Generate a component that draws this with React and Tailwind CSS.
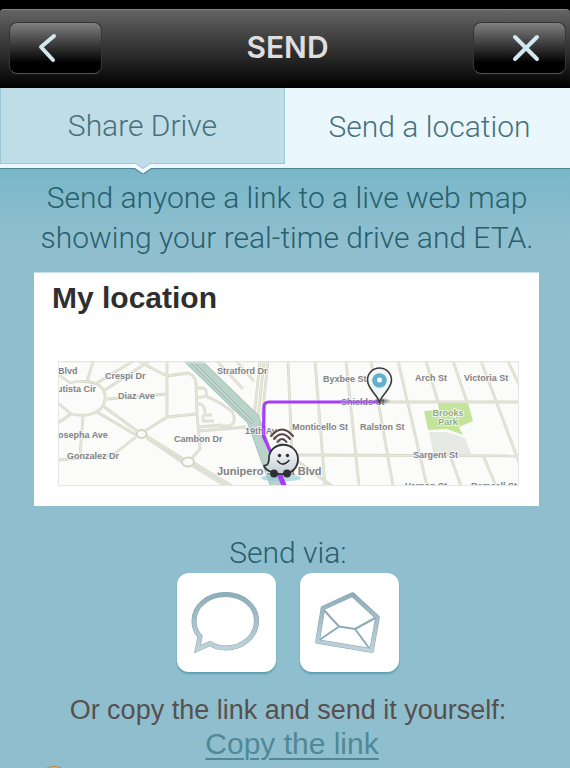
import React, { useState } from 'react';

const roads = [
  'M58 374 L70 383 C76 381 92 380 100 386 C106 391 107 400 102 407 C97 414 86 417 71 414 L58 403',
  'M93 361 L87 382',
  'M97 383 L133 361',
  'M105 390 L145 364 L150 361',
  'M138 361 L167 376',
  'M167 361 L167 417 L145 431',
  'M167 376 L188 373 Q196 376 196 384 L197 414 L200 449 L192 458',
  'M107 399 L167 394',
  'M167 417 L197 414',
  'M103 406 L137 431',
  'M97 412 L136 435',
  'M145 435 L183 459',
  'M147 438 L182 462',
  'M194 463 L232 486',
  'M193 466 L226 486',
  'M136 437 L113 455 L58 460',
  'M83 416 L80 455',
  'M71 414 L58 423',
  'M197 388 H203 Q208 390 206 396 L197 398',
  'M197 404 Q205 402 205 415 H212 M203 415 V421 H214',
  'M199 427 L222 425 M199 431 L246 427',
  'M206 396 L220 403 L232 411 Q238 424 228 426 L217 426',
  'M217 361 L243 389',
  'M236 361 L254 381',
  'M260 361 L254 418',
  'M264 361 L258 418',
  'M268 361 L262 418',
  'M288 361 L292 455',
  'M315 361 L325 486',
  'M346 361 L359 486',
  'M371 361 L393 486',
  'M398 361 L427 486',
  'M426 361 L438 402',
  'M450 455 L461 486',
  'M453 361 L467 402',
  'M481 361 L520 465',
  'M508 361 L520 387',
  'M483 455 L496 486',
  'M380 402 H520',
  'M295 455 L520 456',
  'M272 435 L300 463 L332 486',
];

const labels = [
  { text: 'Blvd', x: 58, y: 374 },
  { text: 'Crespi Dr', x: 105, y: 379 },
  { text: 'utista Cir', x: 57, y: 392 },
  { text: 'Diaz Ave', x: 118, y: 399 },
  { text: 'osepha Ave', x: 58, y: 438 },
  { text: 'Gonzalez Dr', x: 67, y: 459 },
  { text: 'Cambon Dr', x: 174, y: 442 },
  { text: 'Stratford Dr', x: 217, y: 374 },
  { text: 'Byxbee St', x: 323, y: 382 },
  { text: '19th Av', x: 245, y: 434 },
  { text: 'Monticello St', x: 292, y: 430 },
  { text: 'Ralston St', x: 360, y: 430 },
  { text: 'Shields St', x: 341, y: 405 },
  { text: 'Arch St', x: 415, y: 381 },
  { text: 'Victoria St', x: 464, y: 381 },
  { text: 'Sargent St', x: 413, y: 458 },
  { text: 'Vernon St', x: 405, y: 489 },
  { text: 'Ramsell St', x: 471, y: 489 },
];

const LocationMap = () => (
  <svg viewBox="58 361 461 125" className="block w-full font-['Liberation_Sans',sans-serif]" role="img" aria-label="Map">
    <defs>
      <linearGradient id="car" x1="0" y1="0" x2="0" y2="1">
        <stop offset="0" stopColor="#ffffff" />
        <stop offset="1" stopColor="#c3ced4" />
      </linearGradient>
      <linearGradient id="mapEdge" x1="0" y1="0" x2="0" y2="1">
        <stop offset="0" stopColor="#dcdcdc" />
        <stop offset="1" stopColor="#fbfbfa" stopOpacity="0" />
      </linearGradient>
      <radialGradient id="shade">
        <stop offset="0" stopColor="#333" stopOpacity="0.7" />
        <stop offset="1" stopColor="#333" stopOpacity="0" />
      </radialGradient>
    </defs>
    <rect x="58" y="361" width="461" height="125" fill="#fbfbf9" />

    {/* Park */}
    <path d="M429 432 L447 432 L465 438 L471 454 L433 454 Z" fill="#e6e9e4" />
    <path d="M438 403 L468 403 L473 421 L459 427 L463 435 L447 429 L428 430 L424 411 L439 410 Z" fill="#c3e59b" />

    {/* Streets */}
    <g fill="none" strokeLinejoin="round">
      {roads.map((d) => (
        <path key={d} d={d} stroke="#d8dacb" strokeWidth="2.8" />
      ))}
      {roads.map((d) => (
        <path key={d} d={d} stroke="#e6e7da" strokeWidth="1.2" />
      ))}
      <ellipse cx="141.5" cy="434" rx="5" ry="4" fill="#fbfbf9" stroke="#d3d5c4" strokeWidth="2" />
      <ellipse cx="188" cy="462" rx="6" ry="4.5" fill="#fbfbf9" stroke="#d3d5c4" strokeWidth="2" />
    </g>

    {/* Highway */}
    <g fill="none" strokeLinejoin="round">
      <path d="M189 357 L253 419 L275 480 L279 492" stroke="#a1bfb6" strokeWidth="13.6" />
      <path d="M189 357 L253 419 L275 480 L279 492" stroke="#b9d3cb" strokeWidth="12" />
      <path d="M187 357 L253 423" stroke="#8fafa6" strokeWidth="3" />
      <path d="M187 357 L253 423" stroke="#d5e3dc" strokeWidth="1.4" />
    </g>

    <path d="M380 402 H269 Q264 402 264 407 L263.5 436 L275 462 L285 490" fill="none" stroke="#a63dfb" strokeWidth="3.2" />

    <g fontSize="9" fontWeight="700" fill="#7f8285" stroke="#fbfbf9" strokeWidth="1.5" paintOrder="stroke">
      {labels.map((label) => (
        <text key={label.text} x={label.x} y={label.y}>
          {label.text}
        </text>
      ))}
      <text x="217" y="475" fontSize="11">Junipero Serra Blvd</text>
      <g textAnchor="middle" fill="#8fac72">
        <text x="448" y="416">Brooks</text>
        <text x="448" y="425">Park</text>
      </g>
    </g>
    <path d="M340 402 H380 M264 426 L263.5 436 L266 442" fill="none" stroke="#a63dfb" strokeWidth="3.2" opacity="0.7" />

    {/* Destination pin */}
    <ellipse cx="382" cy="401" rx="9" ry="3.5" fill="url(#shade)" />
    <path d="M379.5 402 C377 394 367.5 389 367.5 380 A12 12 0 0 1 391.5 380 C391.5 389 382 394 379.5 402 Z" fill="#f1f6f9" stroke="#3a3a3a" strokeWidth="1.6" />
    <circle cx="379.5" cy="380.5" r="7.3" fill="#64b0cb" />
    <circle cx="379.5" cy="380" r="2.5" fill="#fff" />

    {/* Car */}
    <ellipse cx="281" cy="478" rx="20" ry="3.5" fill="#8fc8d4" opacity="0.6" />
    <path d="M279 473 L285 488" stroke="#a63dfb" strokeWidth="5" />
    <g fill="none" stroke="#55454a" strokeWidth="2" strokeLinecap="round">
      <path d="M271 436 Q282 423 293 436" />
      <path d="M274 439 Q282 429.5 290 439" />
      <path d="M277.5 442 Q282 436 286.5 442" />
    </g>
    <path
      d="M269 457 C271 440.5 296 440.5 298 458 C298.5 468 291 474 283 474 C276 474.5 265.5 471.5 264 465.5 C268 466 269 463 269 457 Z"
      fill="url(#car)"
      stroke="#333638"
      strokeWidth="1.8"
      strokeLinejoin="round"
    />
    <circle cx="274" cy="473.5" r="3.9" fill="#2d2f31" />
    <circle cx="287" cy="473.5" r="3.9" fill="#2d2f31" />
    <circle cx="279.5" cy="455.5" r="1.7" fill="#2d2f31" />
    <circle cx="287.5" cy="455.5" r="1.7" fill="#2d2f31" />
    <path d="M277.5 461 Q283 467.5 289 460.5" fill="none" stroke="#2d2f31" strokeWidth="1.6" strokeLinecap="round" />

    <rect x="58" y="361" width="461" height="3" fill="url(#mapEdge)" />
    <path d="M58.5 361 V485.5 H518.5 V361" fill="none" stroke="#e6e6e6" strokeWidth="1" />
  </svg>
);

const bubblePath =
  'M33 70.5 Q40 75 48.5 75 C66 75 79.5 63 79.5 48 S66 21.5 48.5 21.5 S17 33 17 48 Q17 57 23 63.5 L20.5 76 L33 70.5 Z';

const BubbleIcon = () => (
  <svg viewBox="0 0 99 99" className="w-full" aria-hidden="true">
    <defs>
      <linearGradient id="bubble" x1="0" y1="0" x2="0" y2="1">
        <stop offset="0" stopColor="#8faebb" />
        <stop offset="1" stopColor="#bfd3da" />
      </linearGradient>
    </defs>
    <path d={bubblePath} fill="none" stroke="#86a5b2" strokeWidth="5" />
    <path d={bubblePath} fill="none" stroke="url(#bubble)" strokeWidth="4" />
  </svg>
);

const EnvelopeIcon = () => (
  <svg viewBox="0 0 99 99" className="w-full" aria-hidden="true">
    <defs>
      <linearGradient id="envelope" x1="0" y1="0" x2="0" y2="1">
        <stop offset="0" stopColor="#8faebb" />
        <stop offset="1" stopColor="#bfd3da" />
      </linearGradient>
    </defs>
    <g fill="none" strokeLinejoin="round">
      <path d="M23 36 L39 53.5 L55 56 L77 44 M39 53.5 L18 68 M55 56 L70.5 77" stroke="#8dabb8" strokeWidth="2" />
      <path d="M52.5 21.5 L77.5 44.5 L71.5 77.5 L17.5 68.5 L23 35 Z" stroke="#86a5b2" strokeWidth="4.6" />
      <path d="M52.5 21.5 L77.5 44.5 L71.5 77.5 L17.5 68.5 L23 35 Z" stroke="url(#envelope)" strokeWidth="3.6" />
    </g>
  </svg>
);

const headerButton =
  'flex h-[52px] w-[93px] items-center justify-center rounded-lg border border-[#353535] border-b-[#555] bg-linear-to-b/srgb from-[#808080] to-black to-80%';

const sendButton = 'size-[99px] rounded-xl bg-white shadow-[0_2px_2px_#5d9fb1]';

const App = () => {
  const [tab, setTab] = useState('drive');

  return (
    <div className="relative flex min-h-screen flex-col overflow-hidden bg-[#8fbfce] font-[Roboto,sans-serif]">
      {/* Header */}
      <div className="bg-black pt-[9px]">
        <header className="flex h-[79px] items-center justify-between rounded-t border-t border-[#858585] bg-linear-to-b/srgb from-[#646464] to-black pr-1 pb-0.5 pl-[9px]">
          <button type="button" aria-label="Back" className={`${headerButton} pr-4`}>
            <svg viewBox="0 0 20 30" className="h-[30px] w-5" fill="none" stroke="#d3e8ef" strokeWidth="4" strokeLinecap="round" strokeLinejoin="round">
              <path d="M16 3 L3 14 L15 27" />
            </svg>
          </button>
          <h1 className="pb-0.5 font-[Inter,sans-serif] text-[30px] font-semibold text-[#dedede]">SEND</h1>
          <button type="button" aria-label="Close" className={`${headerButton} pl-3`}>
            <svg viewBox="0 0 28 28" className="size-7" fill="none" stroke="#d3e8ef" strokeWidth="4" strokeLinecap="round">
              <path d="M3 3 L25 25 M25 3 L3 25" />
            </svg>
          </button>
        </header>
      </div>

      {/* Tabs */}
      <nav className="relative z-10 flex border-b border-[#4f8591] bg-[#eaf8fe] text-[30px] font-light text-[#48707c]">
        <div className="relative w-1/2 pb-1">
          <button
            type="button"
            aria-pressed={tab === 'drive'}
            onClick={() => setTab('drive')}
            className="h-[76px] w-full border border-t-0 border-[#9bc8d9] bg-[#bfdde7]"
          >
            Share Drive
          </button>
          <svg viewBox="0 0 22 12" className="absolute -bottom-1.5 left-1/2 h-3 w-[22px] -translate-x-1/2" aria-hidden="true">
            <path d="M0 6.5 L3 6.5 L11 12 L19 6.5 L22 6.5" fill="none" stroke="#4f8591" strokeWidth="1.5" />
            <path d="M0 2 H22 V6 H19 L11 11.5 L3 6 H0 Z" fill="#f2fbff" />
            <path d="M2 0 H20 V2 H18 L11 7 L4 2 H2 Z" fill="#bfdde7" />
            <path d="M0 1.5 H4 L11 6.5 L18 1.5 H22" fill="none" stroke="#9bc8d9" strokeWidth="1" />
          </svg>
        </div>
        <button
          type="button"
          aria-pressed={tab === 'location'}
          onClick={() => setTab('location')}
          className="h-[76px] w-1/2 pl-1"
        >
          Send a location
        </button>
      </nav>

      {/* Content */}
      <main className="flex-1 bg-gradient-to-b from-[#78b7c9] to-transparent to-[70px] pt-[9px] text-center">
        <p className="pr-6 pl-7 text-[30px] leading-10 font-light text-[#285f6d]">
          Send anyone a link to a live web map showing your real-time drive and ETA.
        </p>

        <section className="mt-3.5 mr-[31px] ml-[34px] border-t border-[#c5e2ea] bg-white pt-[7px] pr-5 pb-5 pl-6 text-left">
          <h2 className="-ml-1.5 font-['Liberation_Sans',sans-serif] text-[30px] leading-9 font-bold text-[#2f2f2f]">My location</h2>
          <div className="mt-[45px]">
            <LocationMap />
          </div>
        </section>

        <div className="pl-[6px]">
          <h3 className="mt-[27px] text-[30px] leading-10 font-light text-[#285f6d]">Send via:</h3>
          <div className="flex justify-center gap-6">
            <button type="button" aria-label="Message" className={sendButton}>
              <BubbleIcon />
            </button>
            <button type="button" aria-label="Email" className={sendButton}>
              <EnvelopeIcon />
            </button>
          </div>
          <p className="mt-5 font-['Liberation_Sans',sans-serif] text-[27px] leading-9 text-[#57504f]">
            Or copy the link and send it yourself:
          </p>
          <a href="#copy" className="ml-2 inline-block font-['Liberation_Sans',sans-serif] text-[30px] leading-8 text-[#528896] underline decoration-2 underline-offset-4">
            Copy the link
          </a>
        </div>
      </main>
      <div className="absolute -bottom-[34px] left-9 size-9 rounded-full border border-[#b98a4c] bg-[#f2b234]" />
    </div>
  );
};

export default App;
